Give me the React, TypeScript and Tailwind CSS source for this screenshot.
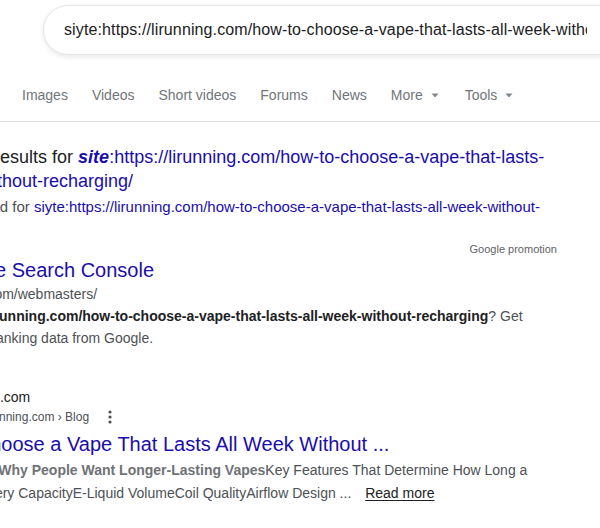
import { ReactNode } from "react";

const query = "siyte:https://lirunning.com/how-to-choose-a-vape-that-lasts-all-week-without-recharging/";

const tabs = ["Images", "Videos", "Short videos", "Forums", "News"];

const Caret = () => (
  <svg width="8" height="5" viewBox="0 0 8 5" className="ml-[8px] mt-[1px]">
    <path d="M0.5 0.5h7L4 4.5z" fill="#80868b" />
  </svg>
);

const Tab = ({ children }: { children: ReactNode }) => (
  <div className="flex items-center whitespace-nowrap">{children}</div>
);

const SearchBar = () => (
  <div className="ml-[43px] mt-[5px] flex h-[50px] w-[620px] items-center rounded-l-[25px] border border-[#e4e6ea] bg-white pl-[20px] shadow-[0_2px_5px_rgba(32,33,36,0.1)]">
    <div className="w-[523px] overflow-hidden whitespace-nowrap text-[16px] leading-[20px] tracking-[0.12px] text-[#202124]">
      {query}
    </div>
  </div>
);

const TabBar = () => (
  <div className="flex gap-[24px] border-b border-[#e0e0e0] pb-[17px] pl-[22px] pt-[31px] text-[14px] leading-[18px] text-[#70757a]">
    {tabs.map((t) => (
      <Tab key={t}>{t}</Tab>
    ))}
    <Tab>
      More
      <Caret />
    </Tab>
    <div className="ml-[2px]">
      <Tab>
        Tools
        <Caret />
      </Tab>
    </div>
  </div>
);

const Kebab = () => (
  <svg width="4" height="14" viewBox="0 0 4 14" className="ml-[19px]">
    <circle cx="2" cy="2" r="1.6" fill="#4d5156" />
    <circle cx="2" cy="7" r="1.6" fill="#4d5156" />
    <circle cx="2" cy="12" r="1.6" fill="#4d5156" />
  </svg>
);

export default function App() {
  return (
    <div className="h-[528px] w-[600px] overflow-hidden bg-white font-['Liberation_Sans',Arial,sans-serif]">
      <SearchBar />
      <TabBar />

      <div className="ml-[-92px] w-[649px]">
        {/* spelling correction */}
        <div className="mt-[23px] whitespace-nowrap text-[18px] leading-[24px] text-[#202124]">
          These are results for{" "}
          <a className="text-[#1a0dab]">
            <b className="italic">site</b>:https://lirunning.com/how-to-choose-a-vape-that-lasts-
            <br />
            all-week-without-recharging/
          </a>
        </div>
        <div className="mt-[3px] whitespace-nowrap text-[15px] leading-[22px] text-[#4d5156]">
          Search instead for{" "}
          <a className="text-[#1a0dab]">
            siyte:https://lirunning.com/how-to-choose-a-vape-that-lasts-all-week-without-
            <br />
            recharging/
          </a>
        </div>

        {/* promotion */}
        <div className="mt-[2px] text-right text-[11px] leading-[14px] text-[#5f6368]">Google promotion</div>
        <div className="mt-[1px] text-[20px] leading-[26px] text-[#1a0dab]">Try Google Search Console</div>
        <div className="text-[14px] leading-[22px] text-[#4d5156]">www.google.com/webmasters/</div>
        <div className="whitespace-nowrap text-[14px] leading-[22px] text-[#4d5156]">
          Do you own{" "}
          <b className="text-[#202124]">lirunning.com/how-to-choose-a-vape-that-lasts-all-week-without-recharging</b>? Get
          <br />
          indexing and ranking data from Google.
        </div>

        {/* organic result */}
        <div className="mt-[38px] flex items-center gap-[13px]">
          <div className="h-[26px] w-[26px] shrink-0 rounded-full border border-[#dadce0] bg-[#f1f3f4]" />
          <div>
            <div className="text-[14px] leading-[20px] text-[#202124]">lirunning.com</div>
            <div className="mt-[1px] flex items-center text-[12px] leading-[18px] text-[#4d5156]">
              https://lirunning.com › Blog
              <Kebab />
            </div>
          </div>
        </div>
        <div className="mt-[5px] whitespace-nowrap text-[20px] leading-[26px] text-[#1a0dab]">
          How to Choose a Vape That Lasts All Week Without ...
        </div>
        <div className="mt-[2px] whitespace-nowrap text-[14px] leading-[23px] text-[#4d5156]">
          <span className="text-[#70757a]">Jul 1, 2025 — </span>
          <b className="text-[#6f7276]">Why People Want Longer-Lasting Vapes</b>Key Features That Determine How Long a
          <br />
          Vape LastBattery CapacityE-Liquid VolumeCoil QualityAirflow Design ...{" "}
          <a className="ml-[10px] text-[#202124] underline underline-offset-2">Read more</a>
        </div>
      </div>
    </div>
  );
}
